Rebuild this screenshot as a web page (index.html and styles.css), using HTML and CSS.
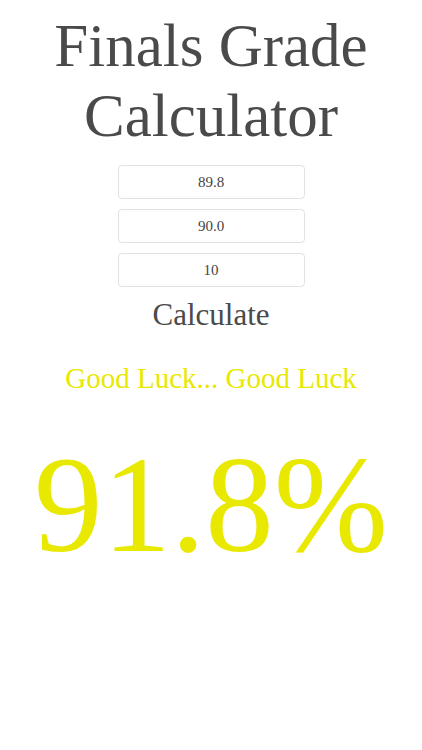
FILE: index.html
```html
<!DOCTYPE html>
<html lang="en">
<head>
    <meta charset="UTF-8">
    <meta name="viewport" content="width=device-width, initial-scale=1.0">
    <title>Finals Grade Calculator</title>
    <link rel="stylesheet" href="styles.css">
</head>
<body>
    <div class="container">
        <h1>Finals Grade Calculator</h1>
        <div class="inputs">
            <input type="text" id="current" value="89.8">
            <input type="text" id="desired" value="90.0">
            <input type="text" id="weight" value="10">
        </div>
        <button class="calculate">Calculate</button>
        <p class="message">Good Luck... Good Luck</p>
        <p class="result">91.8%</p>
    </div>
</body>
</html>
```

FILE: styles.css
```css
body {
    margin: 0;
    font-family: 'Liberation Serif', 'Times New Roman', serif;
    background-color: #ffffff;
    color: #4a4a4a;
}
.container {
    text-align: center;
}
h1 {
    font-size: 61px;
    font-weight: normal;
    line-height: 70px;
    margin: 11px 0 14px;
    color: #4a4a4a;
}
.inputs {
    display: flex;
    flex-direction: column;
    align-items: center;
    gap: 10px;
}
input[type="text"] {
    box-sizing: border-box;
    width: 187px;
    height: 34px;
    border: 1px solid #e2e2e2;
    border-radius: 4px;
    text-align: center;
    font-family: inherit;
    font-size: 15px;
    color: #444;
    outline: none;
}
.calculate {
    display: block;
    margin: 10px auto 0;
    padding: 0;
    background: none;
    border: none;
    font-family: inherit;
    font-size: 31px;
    line-height: 36px;
    color: #4a4a4a;
    cursor: pointer;
}
.message {
    margin: 28px 0 0;
    font-size: 29px;
    line-height: 34px;
    color: #e8e800;
}
.result {
    margin: 42px 0 0;
    font-size: 137px;
    line-height: 137px;
    color: #e8e800;
}
```
